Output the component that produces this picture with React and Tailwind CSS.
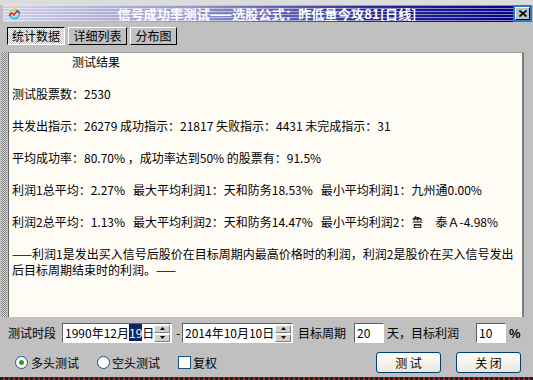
import React from "react";

const font = "font-['Noto_Sans_CJK_SC','Noto_Sans',sans-serif]";

function Spinner() {
  return (
    <div className="flex h-[17px] w-[16px] flex-col gap-[1px]">
      <div className="flex flex-1 items-center justify-center border border-t-white border-l-white border-b-[#808080] border-r-[#808080] bg-[#d4d0c8]">
        <svg width="5" height="3" viewBox="0 0 5 3">
          <path d="M2.5 0L5 3H0z" fill="#000" />
        </svg>
      </div>
      <div className="flex flex-1 items-center justify-center border border-t-white border-l-white border-b-[#808080] border-r-[#808080] bg-[#d4d0c8]">
        <svg width="5" height="3" viewBox="0 0 5 3">
          <path d="M0 0H5L2.5 3z" fill="#000" />
        </svg>
      </div>
    </div>
  );
}

function DateField({ children, width }) {
  return (
    <div
      className={`flex h-[20px] items-center border border-t-[#606060] border-l-[#606060] border-b-white border-r-white bg-white pl-[2px] pr-[1px] ${width}`}
    >
      <span className="flex-1 text-[12px] leading-[14px] whitespace-pre">{children}</span>
      <Spinner />
    </div>
  );
}

function Tab({ label, active, width }) {
  return (
    <div
      className={
        active
          ? `flex h-[18px] items-center justify-center border border-t-black border-l-black border-b-white border-r-white bg-[repeating-conic-gradient(#ffffff_0_25%,#c0c0c0_0_50%)] bg-[length:2px_2px] text-[12px] ${width}`
          : `flex h-[18px] items-center justify-center border border-t-white border-l-white border-b-black border-r-black bg-[#c0c0c0] text-[12px] ${width}`
      }
    >
      {label}
    </div>
  );
}

function XpButton({ label }) {
  return (
    <div className="flex h-[21px] w-[65px] items-center justify-center rounded-[3px] border border-[#003c74] bg-[linear-gradient(to_bottom,#ffffff,#ece9d8)] text-[12px] whitespace-pre">
      {label}
    </div>
  );
}

const lines = [
  { text: "测试结果", indent: true },
  { text: "" },
  { text: "测试股票数：2530" },
  { text: "" },
  { text: "共发出指示：26279 成功指示：21817 失败指示：4431 未完成指示：31" },
  { text: "" },
  { text: "平均成功率：80.70% ，成功率达到50% 的股票有：91.5%" },
  { text: "" },
  { text: "利润1总平均：2.27%   最大平均利润1：天和防务18.53%   最小平均利润1：九州通0.00%" },
  { text: "" },
  { text: "利润2总平均：1.13%   最大平均利润2：天和防务14.47%   最小平均利润2：鲁　泰Ａ-4.98%" },
  { text: "" },
  { text: "——利润1是发出买入信号后股价在目标周期内最高价格时的利润，利润2是股价在买入信号发出" },
  { text: "后目标周期结束时的利润。——" },
];

export default function App() {
  return (
    <div className={`relative flex h-[380px] w-[533px] flex-col overflow-hidden bg-[#c0c0c0] text-black ${font}`}>
      <div className="h-[5px] bg-[#dcdcdc]" />

      {/* title bar */}
      <div className="relative ml-[3px] mr-[1px] flex h-[17px] items-center bg-[linear-gradient(to_right,#d0d0e8_0%,#9898cc_35%,#2a2a98_70%,#000080_100%)]">
        <div className="absolute inset-0 bg-[repeating-linear-gradient(to_bottom,rgba(255,255,255,0.5)_0px,rgba(255,255,255,0.5)_1px,transparent_1px,transparent_3px)]" />
        <svg className="relative ml-[5px]" width="13" height="12" viewBox="0 0 13 12">
          <circle cx="6.5" cy="6" r="4.5" fill="none" stroke="#18d0f0" strokeWidth="2" />
          <path d="M2 4.5 A4.5 4.5 0 0 1 9 2" fill="none" stroke="#f8e010" strokeWidth="2" />
          <path d="M1 8 L4 5 L6 7 L9 3 L12 5" fill="none" stroke="#e81818" strokeWidth="1.4" />
        </svg>
        <div className="relative flex-1 text-center text-[13px] leading-[17px] font-bold tracking-[0.2px] text-white">
          信号成功率测试——选股公式：昨低量今攻81[日线]
        </div>
        <div className="relative flex h-[17px] items-center bg-[#1a7fd4] px-[2px]">
          <div className="flex h-[13px] w-[15px] items-center justify-center border border-t-white border-l-white border-b-black border-r-black bg-[#c0c0c0]">
            <svg width="8" height="7" viewBox="0 0 8 7">
              <path d="M0.5 0.5L7.5 6.5M7.5 0.5L0.5 6.5" stroke="#000" strokeWidth="1.6" />
            </svg>
          </div>
        </div>
      </div>

      {/* tabs */}
      <div className="mt-[5px] flex h-[18px] gap-[3px] pl-[7px]">
        <Tab label="统计数据" active width="w-[58px]" />
        <Tab label="详细列表" width="w-[59px]" />
        <Tab label="分布图" width="w-[47px]" />
      </div>

      {/* content panel */}
      <div className="mt-[7px] flex h-[265px]">
        <div className="ml-[1px] w-[6px] bg-[repeating-conic-gradient(#7a7a7a_0_25%,#e0e0e0_0_50%)] bg-[length:2px_2px]" />
        <div className="ml-[1px] w-[516px] border-t border-l border-t-[#a0a0a0] border-l-[#606060] border-r-2 border-r-[#808080] bg-[#fffcf6] pl-[3px] pt-[1px]">
          {lines.map((line, i) => (
            <div
              key={i}
              className={
                line.indent
                  ? "h-[16px] pl-[60px] text-[12px] leading-[16px] whitespace-pre"
                  : "h-[16px] text-[12px] leading-[16px] whitespace-pre"
              }
            >
              {line.text}
            </div>
          ))}
        </div>
      </div>

      {/* row 1 */}
      <div className="mt-[6px] flex h-[20px] items-center text-[12px]">
        <span className="ml-[8px] w-[48px]">测试时段</span>
        <div className="ml-[6px]">
          <DateField width="w-[110px]">
            1990年12月<span className="bg-[#0a246a] text-white">19</span>日
          </DateField>
        </div>
        <span className="ml-[4px] w-[6px]">-</span>
        <DateField width="w-[111px]">2014年10月10日</DateField>
        <span className="ml-[5px]">目标周期</span>
        <div className="ml-[8px] flex h-[20px] w-[30px] items-center border border-t-[#606060] border-l-[#606060] border-b-white border-r-white bg-white pl-[2px]">
          20
        </div>
        <span className="ml-[3px]">天，目标利润</span>
        <div className="ml-[17px] flex h-[20px] w-[30px] items-center border border-t-[#606060] border-l-[#606060] border-b-white border-r-white bg-white pl-[2px]">
          10
        </div>
        <span className="ml-[3px] font-bold">%</span>
      </div>

      {/* row 2 */}
      <div className="mt-[9px] flex h-[21px] items-center text-[12px]">
        <div className="ml-[15px] flex h-[13px] w-[13px] items-center justify-center rounded-full border border-[#1c5180] bg-white">
          <div className="h-[5px] w-[5px] rounded-full bg-[#21a121]" />
        </div>
        <span className="ml-[3px] w-[48px]">多头测试</span>
        <div className="ml-[18px] h-[13px] w-[13px] rounded-full border border-[#1c5180] bg-white" />
        <span className="ml-[2px] w-[48px]">空头测试</span>
        <div className="ml-[18px] h-[13px] w-[13px] border border-[#1c5180] bg-white" />
        <span className="ml-[2px]">复权</span>
        <div className="ml-[159px] flex gap-[15px]">
          <XpButton label="测 试" />
          <XpButton label="关 闭" />
        </div>
      </div>

      <div className="mt-auto h-[3px] bg-[#202020] bg-[repeating-linear-gradient(to_right,#202020_0px,#202020_3px,#a02020_3px,#a02020_5px)]" />
    </div>
  );
}
